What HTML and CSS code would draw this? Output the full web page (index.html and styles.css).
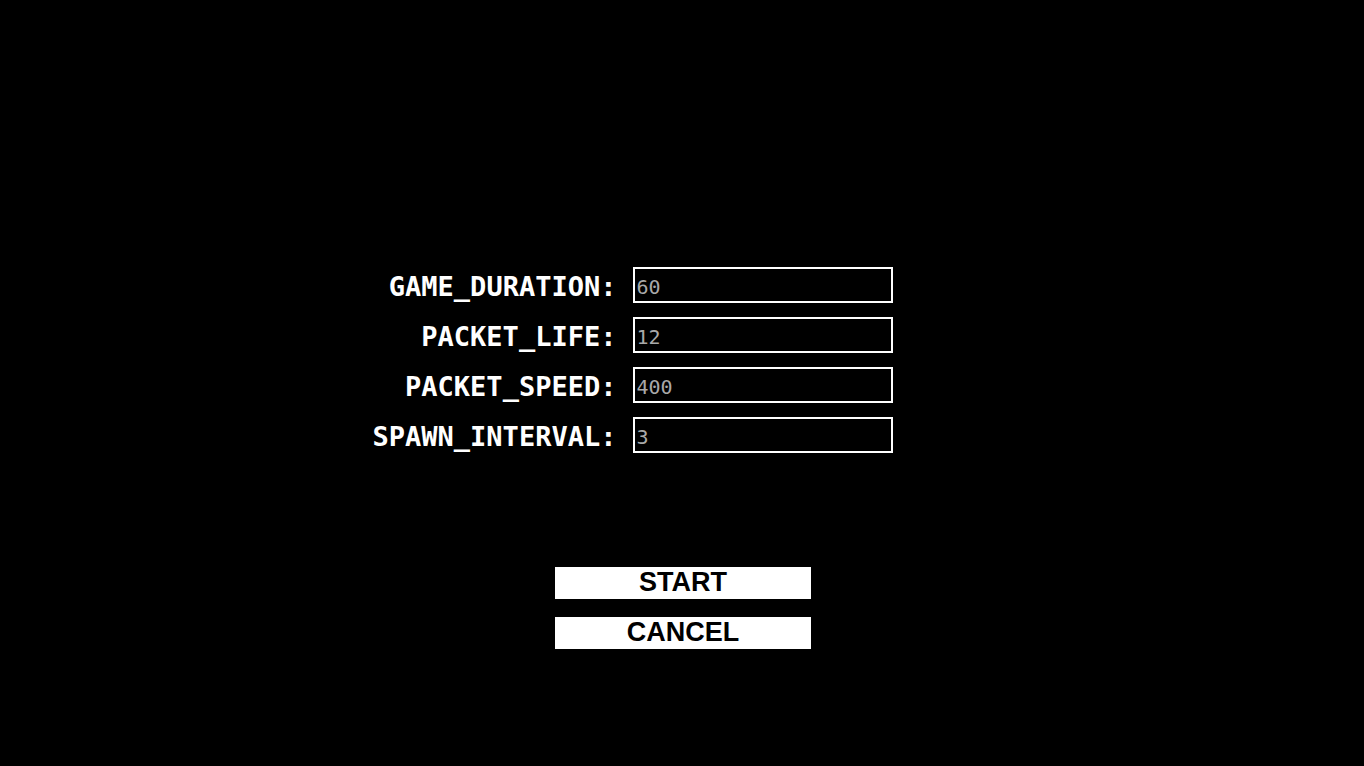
FILE: index.html
```html
<!DOCTYPE html>
<html lang="en">
<head>
  <meta charset="utf-8">
  <meta name="viewport" content="width=device-width, initial-scale=1">
  <title>Game settings</title>
  <link rel="stylesheet" href="styles.css">
</head>
<body>
  <form class="settings">
    <div class="fields">
      <label class="field-label" for="duration">GAME_DURATION:</label>
      <input class="field-input" id="duration" type="text" placeholder="60">
      <label class="field-label" for="life">PACKET_LIFE:</label>
      <input class="field-input" id="life" type="text" placeholder="12">
      <label class="field-label" for="speed">PACKET_SPEED:</label>
      <input class="field-input" id="speed" type="text" placeholder="400">
      <label class="field-label" for="interval">SPAWN_INTERVAL:</label>
      <input class="field-input" id="interval" type="text" placeholder="3">
    </div>
    <div class="actions">
      <button class="action" type="button">START</button>
      <button class="action" type="button">CANCEL</button>
    </div>
  </form>
</body>
</html>
```

FILE: styles.css
```css
* {
  box-sizing: border-box;
}

body {
  margin: 0;
  background: #000;
  color: #fff;
  font-family: "DejaVu Sans Mono", "Liberation Mono", monospace;
}

.settings {
  padding-top: 267px;
}

.fields {
  display: grid;
  grid-template-columns: auto 260px;
  grid-auto-rows: 36px;
  justify-content: center;
  align-items: center;
  gap: 14px 17px;
  padding-right: 98px;
}

.field-label {
  padding-top: 4px;
  font-size: 27px;
  font-weight: bold;
  line-height: 32px;
  text-align: right;
}

.field-input {
  width: 100%;
  height: 36px;
  padding: 4px 1px 0;
  border: 2px solid #fff;
  border-radius: 0;
  background: #000;
  color: #fff;
  font-family: inherit;
  font-size: 20px;
}

.field-input::placeholder {
  color: #a9a9a9;
  opacity: 1;
}

.actions {
  display: flex;
  flex-direction: column;
  align-items: center;
  gap: 18px;
  margin-top: 114px;
  padding-left: 2px;
}

.action {
  width: 256px;
  height: 32px;
  padding: 0 0 2px;
  border: 0;
  background: #fff;
  color: #000;
  font-family: "Liberation Sans", Arial, sans-serif;
  font-size: 27px;
  font-weight: bold;
  line-height: 30px;
}
```
